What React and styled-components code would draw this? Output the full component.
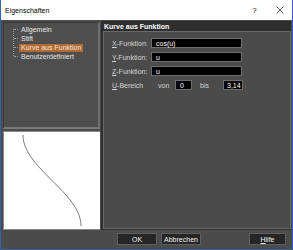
import styled, { createGlobalStyle } from "styled-components";

const GlobalStyle = createGlobalStyle`
  html, body {
    margin: 0;
    padding: 0;
    background: #ffffff;
  }
  body {
    font-family: "Liberation Sans", Arial, sans-serif;
    font-size: 7px;
  }
`;

const Window = styled.div`
  width: 293px;
  height: 250px;
  box-sizing: border-box;
  border: 1px solid #2f62a8;
  border-top: none;
  display: flex;
  flex-direction: column;
  background: #4b4b4b;
  overflow: hidden;
`;

const TitleBar = styled.div`
  height: 20px;
  flex: none;
  background: #ffffff;
  display: flex;
  align-items: center;
  padding-left: 4px;
  color: #000;
  font-size: 7px;
`;

const TitleText = styled.span`
  flex: 1;
`;

const TitleButton = styled.span`
  width: 25px;
  text-align: center;
  font-size: 8px;
  color: #222;
  display: flex;
  justify-content: center;
`;

const Body = styled.div`
  flex: 1;
  display: flex;
  flex-direction: column;
  padding: 1px 1px 0 2px;
`;

const Main = styled.div`
  display: flex;
  height: 209px;
`;

const LeftColumn = styled.div`
  width: 97px;
  display: flex;
  flex-direction: column;
  padding-top: 1px;
  margin-right: 1px;
`;

const TreePanel = styled.div`
  height: 107px;
  box-sizing: border-box;
  background: #4e4e4e;
  border: 1px solid #3a3a3a;
  border-bottom: 2px solid #7a7a7a;
  border-right: 2px solid #6e6e6e;
  padding-top: 2px;
  position: relative;
`;

const TreeLine = styled.div`
  position: absolute;
  left: 9px;
  top: 6px;
  height: 27px;
  border-left: 1px dotted #9a9a9a;
`;

const TreeItem = styled.div`
  display: flex;
  align-items: center;
  height: 9px;
  padding-left: 10px;
`;

const Branch = styled.span`
  width: 4px;
  border-top: 1px dotted #9a9a9a;
  margin-right: 1px;
`;

const ItemLabel = styled.span`
  color: #e6e6e6;
  padding: 0 2px;
  line-height: 8px;
  background: ${(p) => (p.$selected ? "#b5692c" : "transparent")};
`;

const Preview = styled.div`
  margin-top: 2px;
  flex: 1;
  background: #ffffff;
  border: 1px solid #8a8a8a;
  border-right: none;
`;

const RightPanel = styled.div`
  flex: 1;
  background: #2e2e2e;
  display: flex;
  flex-direction: column;
  padding: 0 0 1px 2px;
`;

const PanelHeader = styled.div`
  height: 10px;
  display: flex;
  align-items: center;
  color: #ffffff;
  font-weight: bold;
  padding-left: 1px;
`;

const GroupBox = styled.div`
  flex: 1;
  background: #4b4b4b;
  border: 1px solid #6a6a6a;
  padding: 6px 0 0 8px;
  display: flex;
  flex-direction: column;
  gap: 4px;
`;

const FieldRow = styled.div`
  display: flex;
  align-items: center;
  height: 10px;
`;

const Label = styled.span`
  width: ${(p) => p.$w || 39}px;
  color: #d4d4d4;
`;

const Key = styled.span`
  text-decoration: underline;
`;

const Input = styled.div`
  width: ${(p) => p.$w}px;
  height: 10px;
  box-sizing: border-box;
  background: #000000;
  border: 1px solid #6e6e6e;
  color: #ffffff;
  padding-left: ${(p) => p.$pad || 4}px;
  display: flex;
  align-items: center;
  margin-right: ${(p) => p.$mr || 0}px;
`;

const ButtonRow = styled.div`
  display: flex;
  align-items: center;
  height: 12px;
  margin-top: 3px;
  padding-left: 114px;
`;

const Button = styled.div`
  width: ${(p) => p.$w}px;
  height: 12px;
  box-sizing: border-box;
  background: #262626;
  border: 1px solid #5e5e5e;
  color: #f0f0f0;
  display: flex;
  align-items: center;
  justify-content: center;
  margin-left: ${(p) => p.$ml || 0}px;
`;

const curvePoints = () => {
  const pts = [];
  for (let i = 0; i <= 40; i++) {
    const s = i / 40;
    const x = 19 + (58 * (1 - Math.cos(Math.PI * s))) / 2;
    const y = 3 + 91 * s;
    pts.push(`${x.toFixed(2)},${y.toFixed(2)}`);
  }
  return pts.join(" ");
};

const App = () => {
  return (
    <>
      <GlobalStyle />
      <Window>
        <TitleBar>
          <TitleText>Eigenschaften</TitleText>
          <TitleButton>?</TitleButton>
          <TitleButton>
            <svg width="8" height="8" viewBox="0 0 8 8">
              <path d="M0.5 0.5 L7.5 7.5 M7.5 0.5 L0.5 7.5" stroke="#333" strokeWidth="0.8" />
            </svg>
          </TitleButton>
        </TitleBar>
        <Body>
          <Main>
            <LeftColumn>
              <TreePanel>
                <TreeLine />
                <TreeItem><Branch /><ItemLabel>Allgemein</ItemLabel></TreeItem>
                <TreeItem><Branch /><ItemLabel>Stift</ItemLabel></TreeItem>
                <TreeItem><Branch /><ItemLabel $selected>Kurve aus Funktion</ItemLabel></TreeItem>
                <TreeItem><Branch /><ItemLabel>Benutzerdefiniert</ItemLabel></TreeItem>
              </TreePanel>
              <Preview>
                <svg width="96" height="96" viewBox="0 0 96 96">
                  <polyline points={curvePoints()} fill="none" stroke="#6a6a6a" strokeWidth="0.9" />
                </svg>
              </Preview>
            </LeftColumn>
            <RightPanel>
              <PanelHeader>Kurve aus Funktion</PanelHeader>
              <GroupBox>
                <FieldRow>
                  <Label><Key>X</Key>-Funktion:</Label>
                  <Input $w={91}>cos(u)</Input>
                </FieldRow>
                <FieldRow>
                  <Label><Key>Y</Key>-Funktion:</Label>
                  <Input $w={91}>u</Input>
                </FieldRow>
                <FieldRow>
                  <Label><Key>Z</Key>-Funktion:</Label>
                  <Input $w={91}>u</Input>
                </FieldRow>
                <FieldRow>
                  <Label $w={46}><Key>U</Key>-Bereich</Label>
                  <Label $w={17}>von</Label>
                  <Input $w={17} $mr={8}>0</Input>
                  <Label $w={23}>bis</Label>
                  <Input $w={20} $pad={3}>3,14</Input>
                </FieldRow>
              </GroupBox>
            </RightPanel>
          </Main>
          <ButtonRow>
            <Button $w={40}>OK</Button>
            <Button $w={40} $ml={4}>Abbrechen</Button>
            <Button $w={37} $ml={48}><Key>H</Key>ilfe</Button>
          </ButtonRow>
        </Body>
      </Window>
    </>
  );
};

export default App;
